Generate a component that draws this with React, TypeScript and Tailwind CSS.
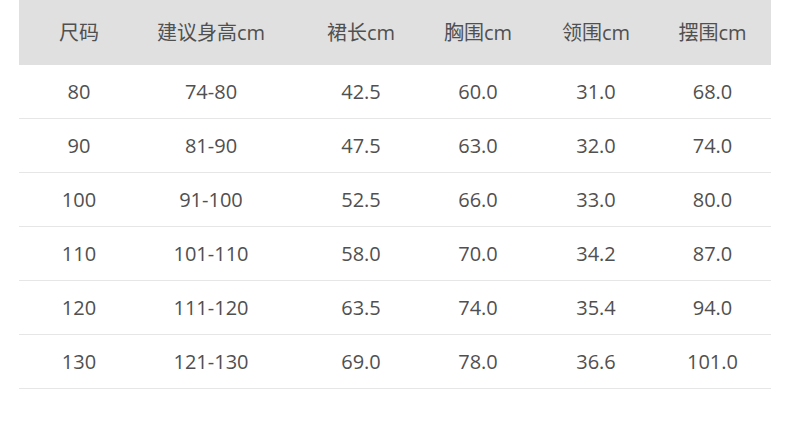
const headers = ['尺码', '建议身高cm', '裙长cm', '胸围cm', '领围cm', '摆围cm'];

const rows = [
	['80', '74-80', '42.5', '60.0', '31.0', '68.0'],
	['90', '81-90', '47.5', '63.0', '32.0', '74.0'],
	['100', '91-100', '52.5', '66.0', '33.0', '80.0'],
	['110', '101-110', '58.0', '70.0', '34.2', '87.0'],
	['120', '111-120', '63.5', '74.0', '35.4', '94.0'],
	['130', '121-130', '69.0', '78.0', '36.6', '101.0'],
];

// column widths picked so the text centres line up with the picture
const grid = 'grid grid-cols-[120px_144px_156px_78px_158px_97px]';

export default function App() {
	return (
		<div className="w-[790px] h-[431px] bg-white px-[19px] text-[#505050] font-['Open_Sans','Noto_Sans_CJK_SC',sans-serif]">
			{/* Header */}
			<div className={`${grid} h-[65px] items-center bg-[#e0e0e0] text-[20px]`}>
				{headers.map((h, i) => (
					<div
						key={h}
						className={`text-center ${i === 5 ? 'pr-[22px]' : ''}`}>
						{h}
					</div>
				))}
			</div>

			{/* Body */}
			{rows.map((row) => (
				<div
					key={row[0]}
					className={`${grid} h-[54px] items-center border-b border-[#e6e6e6] text-[20px]`}>
					{row.map((cell, i) => (
						<div
							key={i}
							className={`text-center ${i === 5 ? 'pr-[22px]' : ''}`}>
							{cell}
						</div>
					))}
				</div>
			))}
		</div>
	);
}
